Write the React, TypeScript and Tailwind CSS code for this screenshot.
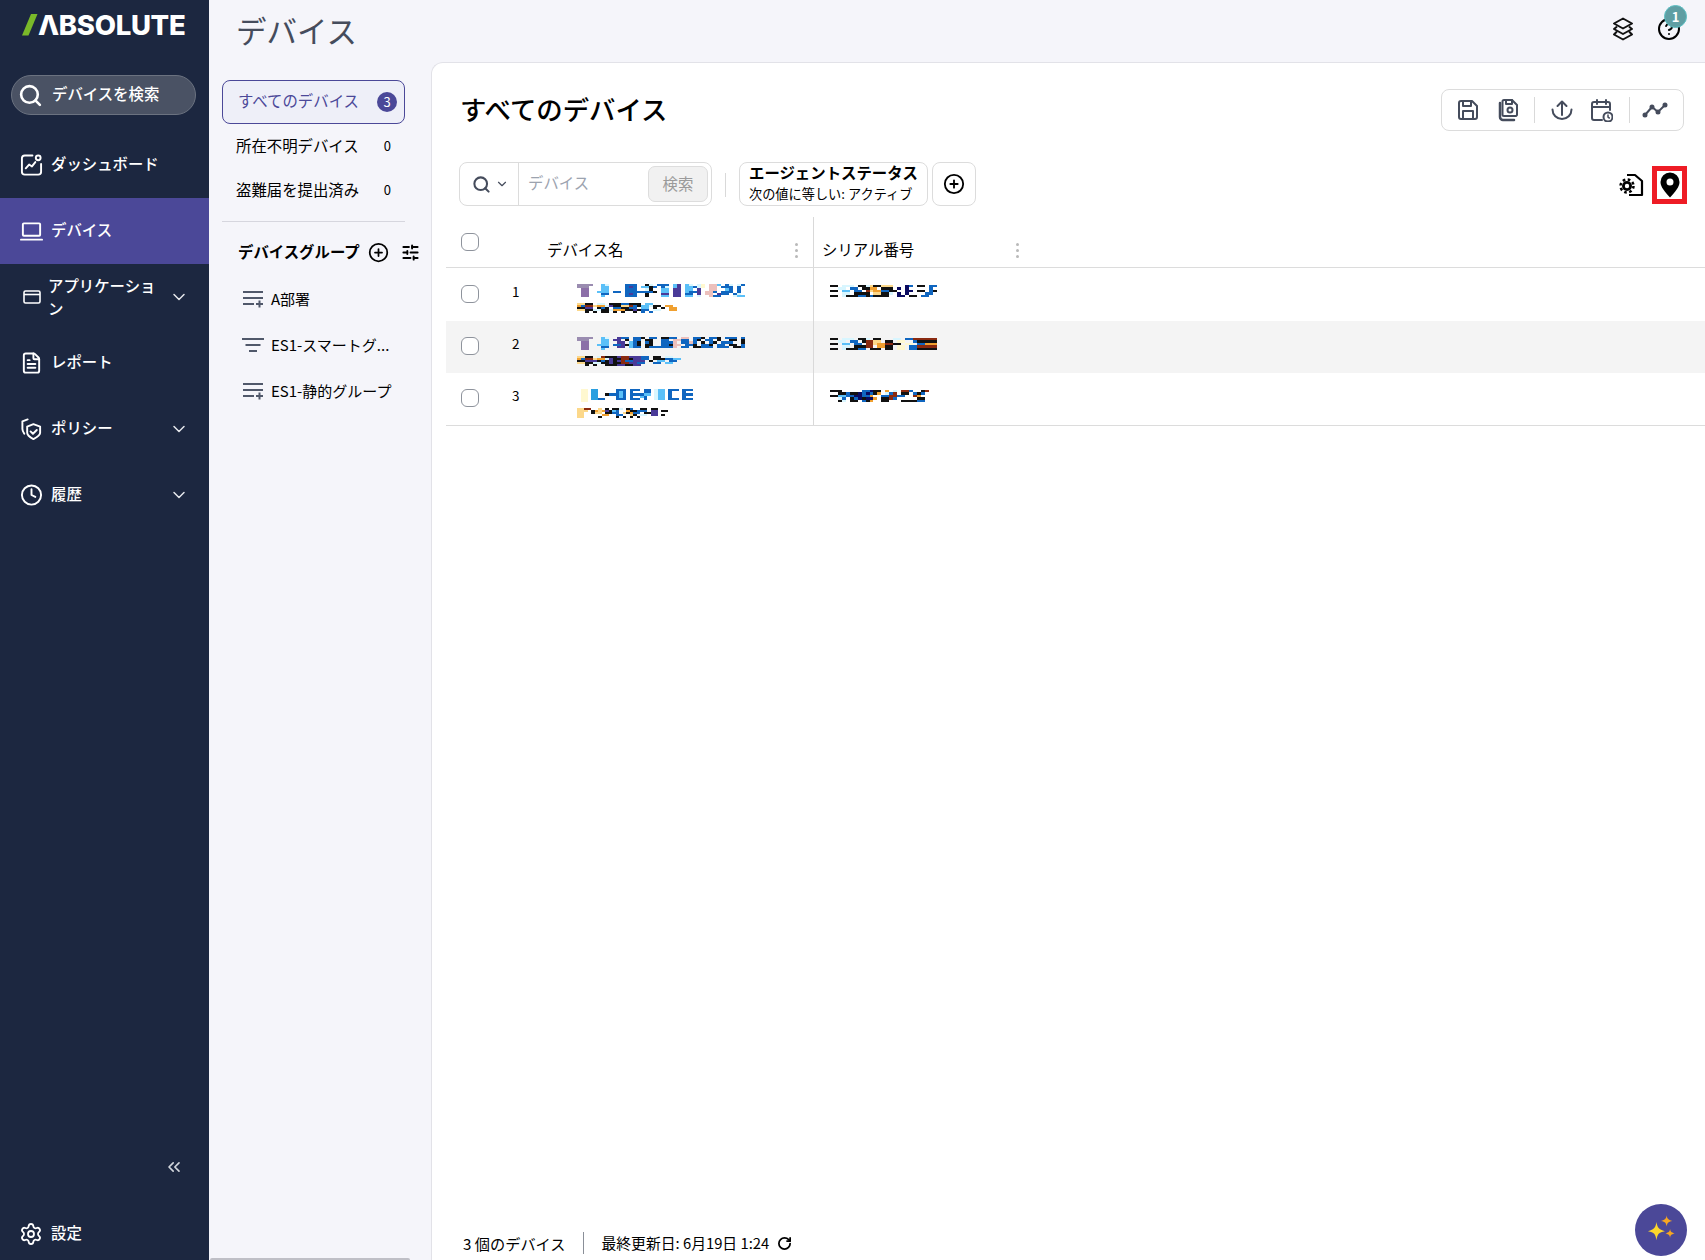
import React from "react";
import { Search, ChevronDown, FileText, Clock, ChevronsLeft, Settings, CirclePlus, SlidersHorizontal, RotateCw, HelpCircle } from "lucide-react";

const palette: Record<string, string> = {
  k: "#111111", b: "#1066c0", c: "#5bc0f8", l: "#d8f6ff", p: "#8c6fa8", d: "#4a3a98", n: "#0a0a60",
  o: "#f0a030", y: "#fff8d0", r: "#8a2a10", s: "#ecc0bc", t: "#fcd88a", g: "#9a8cb0", e: "#2a9fe0",
};

function Mosaic({ rows, cw = 4, ch = 2 }: { rows: string[]; cw?: number; ch?: number }) {
  const cols = Math.max(...rows.map((r) => r.length));
  return (
    <svg width={cols * cw} height={rows.length * ch} shapeRendering="crispEdges" className="block">
      {rows.flatMap((r, y) =>
        r.split("").map((c, x) =>
          palette[c] ? <rect key={`${x}-${y}`} x={x * cw} y={y * ch} width={cw} height={ch} fill={palette[c]} /> : null
        )
      )}
    </svg>
  );
}

const data = [
  {
    n: "1",
    bg: "",
    cw: 4,
    name: [
      "gggg..cl....bbb..kl.bbb.cd.cl.ly.ssc.bl.lb",
      "ggg...cc....bdb.cckb.bl.cd.ccbly.ss.bbb.b.",
      ".pp...cc....bbb..lk..cc.dd.cc.d..ss..cb.b.",
      ".pp..ccc.bb.bbbbbbbk.cc.dd.cbbd.ssb.bbb.b.",
      ".pp...bb....bdb..k...dd.dd.bb.d.ss.dbb.bl.",
      ".pp...c.....bbb..k...cc.dd.cc.l..sbb...lcc",
    ],
    sub: [
      "ttkk.ll.kkkbbkkk.cc..",
      "obrrtooldkkttrbkcclkk.oo",
      "kkdd.kbk.bbkkbb.cc.k.k.oo.",
      "ttkkllkkloookkdkbb.ll..oo",
      "..k.k.kk.k.k..k.b.b....",
    ],
    serial: [
      "kk.lll.kkltkkttt...nb.kk.bb.",
      "..ll.bb.kkoo.kkk.n.n.....b..",
      "kk.cc.bb.rtoobbkk..nn.kk.bk.",
      "...ll.kkkk.ttkkl.n.n....bb..",
      "kk.lkkkbbkbkkkk..nn.kk.bb...",
    ],
  },
  {
    n: "2",
    bg: "bg-[#f4f4f4]",
    cw: 4,
    name: [
      "gggg..cl..dbb.bbk.bb.kkbb.ss.bbk.bbk.bbb.b",
      "ggg...cc.dd.k.bb.kk..bb.ssbb.bk.bb.k..kk.k",
      ".pp...cc..dd.cbk.bk..bbbs.bbsb.k.bk.bbb..k",
      ".pp..ccc.bbdkcbk.kk..bbkss.bbk.bbk.bb.kk.b",
      ".pp...bb..dd.cbb.kbbbbbbs.bb.kkbbb.bbb.kkb",
      ".pp...c...................................",
    ],
    sub: [
      "ttkk.lrkkkdrrdddbb.kk.ll",
      "obrrtooldkkrrkddbb.kkkbbcc",
      "kkdddkbkdkdrbbddd.k.cc.bb",
      "ttkkllkkdkkrrddbb..bb.cc",
      "..k.k..kkkddkkdd.......",
    ],
    serial: [
      "kk.lll.kkl.kk...ll.bbrrrrrr",
      "..ll.bb.krrtt.kk.yy..bkkkkk",
      "kk.cc.bb.rrtoorrkk.yy.bbooo",
      "...ll.kkkrr.ookk.yy.bbrrrrr",
      "kk.lkkkbb.kkk.kk.yy.bbkkkkk",
    ],
  },
  {
    n: "3",
    bg: "",
    cw: 3.5,
    name: [
      ".yy.ee.....bbb.bbb.bb.lcc.bbb.bbb",
      ".yy.ee.....bcb.b...bb.lcc.b...b..",
      ".yy.ee..kbbbcb.bbbbcc.lcc.b...bbb",
      ".yy.ee.....bcb.b..cb..lcc.b...b..",
      ".yy.eebb...bbb.bbb.b..lcc.bbb.bbb",
      ".yy..............................",
    ],
    sub: [
      "ttrr..t.k.kkl.kb..kk.kk.",
      "ttt.kotodkcb..okkbbb.dd.kk",
      "tt..ktt.kkbb.tkobb.kkdd.",
      "tt.....oo..bb..tk.ll.dd.k",
      "tt....k....k.k.k.k..",
    ],
    serial: [
      "kkk.....bbnkk.o.l.rrb..kr",
      "..kkbkknbnbko.lbr.kk.bkb",
      "kkccbbnnbbo..bbrrbb..ro",
      "..lb.kbnknno.kkrb.....kk",
      "..kl.kk.bko..kk...kkkkbb",
    ],
  },
];

function Sep() {
  return <div className="w-px h-[26px] bg-[#d9d9d9]" />;
}

function TI({ children, c = "#454c5c" }: { children: React.ReactNode; c?: string }) {
  return (
    <svg width="24" height="24" viewBox="0 0 24 24" fill="none" stroke={c} strokeWidth="2" strokeLinecap="round" strokeLinejoin="round">
      {children}
    </svg>
  );
}

function NavItem({ icon, label, chevron, active, wrap }: { icon: React.ReactNode; label: string; chevron?: boolean; active?: boolean; wrap?: boolean }) {
  return (
    <div className={`h-[66px] flex items-center pl-[20px] pr-[20px] text-white text-[15.400px] font-medium ${active ? "bg-[#4b4898]" : ""}`}>
      <div className="w-[23px] h-[24px] flex items-center justify-center shrink-0">{icon}</div>
      <div className={wrap ? "ml-[5px] w-[108px] shrink-0 leading-[23px]" : "ml-[8px] -mt-[2px]"}>{label}</div>
      {chevron && <ChevronDown size={20} strokeWidth={1.800} className="text-[#e5e7eb] shrink-0 ml-auto" />}
    </div>
  );
}

function GroupLines({ filter }: { filter?: boolean }) {
  return filter ? (
    <svg width="24" height="18" viewBox="0 0 24 18" stroke="#50586a" strokeWidth="2">
      <path d="M1 3h22M4.500 9h15M8 15h8" />
    </svg>
  ) : (
    <svg width="24" height="18" viewBox="0 0 24 18" stroke="#50586a" strokeWidth="2">
      <path d="M2 2h20M2 8h20M2 14h11M15 14h7M18.500 10.500v7" />
    </svg>
  );
}

function Dots() {
  return (
    <>
      <span className="w-[3px] h-[3px] rounded-full bg-[#b9b9b9]" />
      <span className="w-[3px] h-[3px] rounded-full bg-[#b9b9b9]" />
      <span className="w-[3px] h-[3px] rounded-full bg-[#b9b9b9]" />
    </>
  );
}

export default function App() {
  return (
    <div className="w-[1705px] h-[1260px] flex overflow-hidden bg-[#f5f5fa] text-black font-['Noto_Sans_CJK_JP',sans-serif]">
      {/* sidebar */}
      <aside className="w-[209px] shrink-0 bg-[#1c2740] flex flex-col">
        <div className="h-[75px] pt-[9px] pl-[22px] flex items-start">
          <svg width="16" height="26" viewBox="0 0 16 26" className="mt-[5px] shrink-0">
            <polygon points="0,21.500 9,0 15.500,0 6.500,21.500" fill="#7ab929" />
          </svg>
          <span className="font-['Inter',sans-serif] font-extrabold text-[27.500px] leading-[32px] text-white tracking-[-0.3px]">ΛBSOLUTE</span>
        </div>
        <div className="ml-[11px] mr-[13px] h-[40px] rounded-full bg-[#4a5264] border border-[#6b7280] flex items-center pl-[6px] text-white text-[15.400px] font-medium">
          <Search size={25} strokeWidth={2.500} />
          <span className="ml-[9px] -mt-[2px]">デバイスを検索</span>
        </div>
        <nav className="mt-[17px]">
          <NavItem
            label="ダッシュボード"
            icon={
              <TI c="white">
                <path d="M13 2H5a3 3 0 0 0-3 3v14a3 3 0 0 0 3 3h14a3 3 0 0 0 3-3v-8" />
                <circle cx="19" cy="4.500" r="2.500" />
                <path d="M6 15.500l3.500-4 3 2 3.500-4.500" />
              </TI>
            }
          />
          <NavItem
            active
            label="デバイス"
            icon={
              <TI c="white">
                <rect x="3" y="4" width="18" height="13" rx="1" />
                <path d="M1 21h22" />
              </TI>
            }
          />
          <NavItem
            chevron
            wrap
            label="アプリケーション"
            icon={
              <svg width="18" height="14" viewBox="0 0 18 14" fill="none" stroke="white" strokeWidth="1.600">
                <rect x="1" y="1" width="16" height="12" rx="1.500" />
                <path d="M1 4.500h16" />
              </svg>
            }
          />
          <NavItem label="レポート" icon={<FileText size={24} strokeWidth={2} className="text-white" />} />
          <NavItem
            chevron
            label="ポリシー"
            icon={
              <TI c="white">
                <path d="M14 7l7 2.500v6.500c0 2.500-4 5-7 6.500-3-1.500-6.500-4-6.500-6.500V9.500z" />
                <path d="M11 14.500l2.500 2.500 4-4" />
                <path d="M8 2L2.500 4v8c0 2 1 3.500 2 5" />
              </TI>
            }
          />
          <NavItem chevron label="履歴" icon={<Clock size={24} strokeWidth={2} className="text-white" />} />
        </nav>
        <div className="mt-auto flex justify-end pr-[25px] pb-[37px]">
          <ChevronsLeft size={20} strokeWidth={2} className="text-[#d1d5db]" />
        </div>
        <div className="h-[40px] mb-[6px] flex items-center pl-[19px] text-white text-[15.400px] font-medium">
          <Settings size={24} strokeWidth={1.800} />
          <span className="ml-[8px] -mt-[2px]">設定</span>
        </div>
      </aside>

      <div className="flex-1 flex flex-col min-w-0">
        {/* header */}
        <header className="h-[62px] shrink-0 flex items-start pl-[27px]">
          <div className="text-[30.500px] leading-[60px] text-[#454c5c]">デバイス</div>
          <div className="ml-auto flex items-center gap-[22px] pr-[24px] pt-[17px]">
            <TI c="#111111">
              <path d="M12 1.500l9 5-9 5-9-5z" />
              <path d="M5.500 10L3 12l9 5 9-5-2.500-2" />
              <path d="M5.500 15L3 17.500l9 5 9-5-2.500-2.500" />
            </TI>
            <div className="relative">
              <HelpCircle size={24} strokeWidth={2} />
              <div className="absolute left-[7px] top-[-12px] w-[23px] h-[23px] rounded-full bg-[#5f9ea3] border border-[#5cc0c4] text-white text-[13px] font-bold flex items-center justify-center">1</div>
            </div>
          </div>
        </header>

        <div className="flex-1 flex min-h-0">
          {/* second panel */}
          <div className="w-[222px] shrink-0 flex flex-col text-[15.400px]">
            <div className="pl-[13px] pr-[4px] pt-[18px] flex-1">
              <div className="w-[183px] h-[44px] rounded-[8px] border border-[#4b4898] bg-[#eeeff8] flex items-center pl-[15px] text-[#4b4898]">
                <span className="-mt-[3px]">すべてのデバイス</span>
                <span className="ml-auto mr-[7px] -mt-[1px] w-[20px] h-[20px] rounded-full bg-[#4b4898] text-white text-[13px] flex items-center justify-center">3</span>
              </div>
              <div className="w-[183px] h-[44px] flex items-center pl-[14px]">
                <span className="-mt-[1px]">所在不明デバイス</span>
                <span className="ml-auto mr-[14px] text-[13px]">0</span>
              </div>
              <div className="w-[183px] h-[44px] flex items-center pl-[14px]">
                <span className="-mt-[1px]">盗難届を提出済み</span>
                <span className="ml-auto mr-[14px] text-[13px]">0</span>
              </div>
              <div className="w-[183px] h-px bg-[#d6d6de] mt-[9px]" />
              <div className="h-[54px] pt-[6px] flex items-center pl-[16px] font-bold">
                <span>デバイスグループ</span>
                <CirclePlus size={21} strokeWidth={2} className="ml-[8px]" />
                <SlidersHorizontal size={19} strokeWidth={2.400} className="ml-[12px]" />
              </div>
              {[
                ["A部署", false],
                ["ES1-スマートグ...", true],
                ["ES1-静的グループ", false],
              ].map(([t, f]) => (
                <div key={t as string} className="h-[46px] flex items-center pl-[19px] text-[15px]">
                  <GroupLines filter={f as boolean} />
                  <span className="ml-[6px]">{t as string}</span>
                </div>
              ))}
            </div>
            <div className="h-[2px] w-[200px] ml-px bg-[#bfbfc6] rounded-t" />
          </div>

          {/* main */}
          <main className="flex-1 bg-white border-t border-l border-[#e2e2e8] rounded-tl-[12px] flex flex-col min-w-0 relative">
            <div className="h-[99px] flex items-start pl-[28px] pr-[21px]">
              <h1 className="text-[26.400px] font-medium leading-[38px] mt-[27px]">すべてのデバイス</h1>
              <div className="ml-auto mt-[26px] w-[243px] h-[42px] rounded-[8px] border border-[#dcdcdc] flex items-center pl-[14px]">
                <TI>
                  <path d="M19 21H5a2 2 0 0 1-2-2V5a2 2 0 0 1 2-2h11l5 5v11a2 2 0 0 1-2 2z" />
                  <path d="M7 3v5h8V3M7 21v-8h10v8" />
                </TI>
                <div className="ml-[15px]">
                  <TI>
                    <path d="M5 5v14a3 3 0 0 0 3 3h11" strokeWidth="2.500" />
                    <path d="M20 18H9a1.500 1.500 0 0 1-1.500-1.500v-13A1.500 1.500 0 0 1 9 2h8l5 5v9.500a1.500 1.500 0 0 1-2 1.500z" />
                    <path d="M11 2v4h6V2" />
                    <circle cx="15" cy="12" r="2.500" />
                  </TI>
                </div>
                <div className="ml-[15px]"><Sep /></div>
                <div className="ml-[15px]">
                  <TI>
                    <path d="M12 17V3.500M7.500 8L12 3.500 16.500 8" />
                    <path d="M2.500 11.500a9.500 9.500 0 0 0 19 0" />
                  </TI>
                </div>
                <div className="ml-[15px]">
                  <TI>
                    <path d="M21 12V6a2 2 0 0 0-2-2H5a2 2 0 0 0-2 2v14a2 2 0 0 0 2 2h8M3 9h18M8 2v4M17 2v4" />
                    <circle cx="19" cy="19" r="4.500" fill="white" />
                    <path d="M19 17v2.200l1.300.8" strokeWidth="1.500" />
                  </TI>
                </div>
                <div className="ml-[16px]"><Sep /></div>
                <div className="ml-[12px]">
                  <svg width="26" height="18" viewBox="0 0 26 18" fill="#454c5c" stroke="#454c5c" strokeWidth="2">
                    <path d="M3 14l7-8 6 5 7-7" fill="none" />
                    <circle cx="3" cy="14" r="1.500" />
                    <circle cx="10" cy="6" r="1.500" />
                    <circle cx="16" cy="11" r="1.500" />
                    <circle cx="23" cy="4" r="1.500" />
                  </svg>
                </div>
              </div>
            </div>

            {/* filter row */}
            <div className="h-[55px] flex items-start pl-[27px] pr-[18px]">
              <div className="w-[253px] h-[44px] rounded-[8px] border border-[#dcdcdc] flex items-center">
                <div className="w-[59px] h-full border-r border-[#dcdcdc] flex items-center pl-[12px] shrink-0">
                  <Search size={19} strokeWidth={2.600} className="text-[#454c5c]" />
                  <ChevronDown size={14} className="ml-[4px] text-[#454c5c]" />
                </div>
                <span className="ml-[9px] -mt-[2px] text-[15.400px] text-[#9ca3af]">デバイス</span>
                <div className="ml-auto mr-[3px] w-[60px] h-[36px] rounded-[7px] bg-[#f1f1f1] border border-[#dddddd] flex items-center justify-center text-[15.400px] text-[#9a9a9a]">検索</div>
              </div>
              <div className="ml-[13px] mt-[11px] w-px h-[24px] bg-[#d9d9d9]" />
              <div className="ml-[13px] w-[189px] h-[44px] rounded-[8px] border border-[#dcdcdc] pl-[9px] flex flex-col justify-center">
                <div className="text-[15.400px] font-bold leading-[20px] -mt-[3px]">エージェントステータス</div>
                <div className="text-[13.200px] leading-[20px] mt-[2px] -mb-[1px]">次の値に等しい: アクティブ</div>
              </div>
              <div className="ml-[4px] w-[44px] h-[44px] rounded-[8px] border border-[#dcdcdc] flex items-center justify-center">
                <CirclePlus size={22} strokeWidth={2} />
              </div>
              <div className="ml-auto flex items-center h-[46px]">
                <svg width="26" height="26" viewBox="0 0 26 26" fill="none" stroke="black" strokeWidth="2.200" strokeLinejoin="round" className="mr-[8px]">
                  <path d="M9 3h8l7 6v14H11" />
                  <circle cx="9" cy="14" r="7" fill="white" stroke="none" />
                  <circle cx="9" cy="14" r="6.500" stroke="black" strokeWidth="2.500" strokeDasharray="2.600 2.500" />
                  <circle cx="9" cy="14" r="5" fill="black" stroke="none" />
                  <circle cx="9" cy="14" r="2.200" fill="white" stroke="none" />
                </svg>
                <div className="w-[35px] h-[38px] border-[5px] border-[#ee1c25] flex items-center justify-center">
                  <svg width="20" height="26" viewBox="0 0 20 26">
                    <path fillRule="evenodd" d="M10 0.500a9.500 9.500 0 0 1 9.500 9.500c0 5-4.500 10-9.500 15.500C5 20 0.500 15 0.500 10A9.500 9.500 0 0 1 10 0.500zm0 6a3.500 3.500 0 1 0 0 7 3.500 3.500 0 0 0 0-7z" fill="black" />
                  </svg>
                </div>
              </div>
            </div>

            {/* table */}
            <div className="ml-[14px]">
              <div className="h-[51px] flex border-b border-[#dcdcdc] text-[15.400px]">
                <div className="w-[368px] relative border-r border-[#d9d9d9] shrink-0">
                  <div className="absolute left-[15px] top-[16px] w-[18px] h-[18px] rounded-[6px] border-[1.500px] border-[#8e939c]" />
                  <div className="absolute left-[101px] top-[20px] leading-[24px]">デバイス名</div>
                  <div className="absolute left-[349px] top-[26px] flex flex-col gap-[3px]"><Dots /></div>
                </div>
                <div className="w-[220px] relative">
                  <div className="absolute left-[8px] top-[20px] leading-[24px]">シリアル番号</div>
                  <div className="absolute left-[202px] top-[26px] flex flex-col gap-[3px]"><Dots /></div>
                </div>
              </div>
              {data.map((r, i) => (
                <div key={r.n} className={`h-[52.500px] flex ${r.bg} ${i === 2 ? "border-b border-[#dcdcdc]" : ""}`}>
                  <div className="w-[368px] shrink-0 border-r border-[#d9d9d9] flex items-center pl-[15px]">
                    <div className="w-[18px] h-[18px] rounded-[6px] border-[1.500px] border-[#8e939c] bg-white shrink-0 -mt-[1px]" />
                    <div className="ml-[33px] w-[65px] text-[13.500px] -mt-[7px]">{r.n}</div>
                    <div className="flex flex-col gap-[6px] self-start pt-[16px]">
                      <Mosaic rows={r.name} cw={r.cw} ch={2.200} />
                      <Mosaic rows={r.sub} cw={r.cw} />
                    </div>
                  </div>
                  <div className="pl-[16px] pt-[17px]">
                    <Mosaic rows={r.serial} cw={3.950} ch={2.400} />
                  </div>
                </div>
              ))}
            </div>

            {/* footer */}
            <div className="mt-auto h-[34px] flex items-center pl-[31px] text-[15.200px]">
              <span>3 個のデバイス</span>
              <div className="ml-[17px] w-px h-[22px] bg-[#8a8f98]" />
              <span className="ml-[18px] text-[14.800px]">最終更新日: 6月19日 1:24</span>
              <RotateCw size={15} strokeWidth={2.800} className="ml-[8px]" />
            </div>
            <div className="absolute right-[18px] bottom-[4px] w-[52px] h-[52px] rounded-full bg-[#4b4898] flex items-center justify-center">
              <svg width="34" height="34" viewBox="0 0 30 30">
                <path d="M11 8c.8 5 2 6.500 7.500 8-5.500 1-6.700 2.500-7.500 8-.8-5.500-2-7-7.500-8 5.500-1.500 6.700-3 7.500-8z" fill="#fcd72c" />
                <path d="M20 2c.4 3 1.200 3.800 5 5-3.800.8-4.600 1.800-5 5-.4-3.200-1.200-4.200-5-5 3.800-1.200 4.600-2 5-5z" fill="#f6a623" />
                <path d="M23 14c.3 2.500 1 3.200 4 4-3 .7-3.700 1.500-4 4-.3-2.500-1-3.300-4-4 3-.8 3.700-1.500 4-4z" fill="#f6a623" />
              </svg>
            </div>
          </main>
        </div>
      </div>
    </div>
  );
}
